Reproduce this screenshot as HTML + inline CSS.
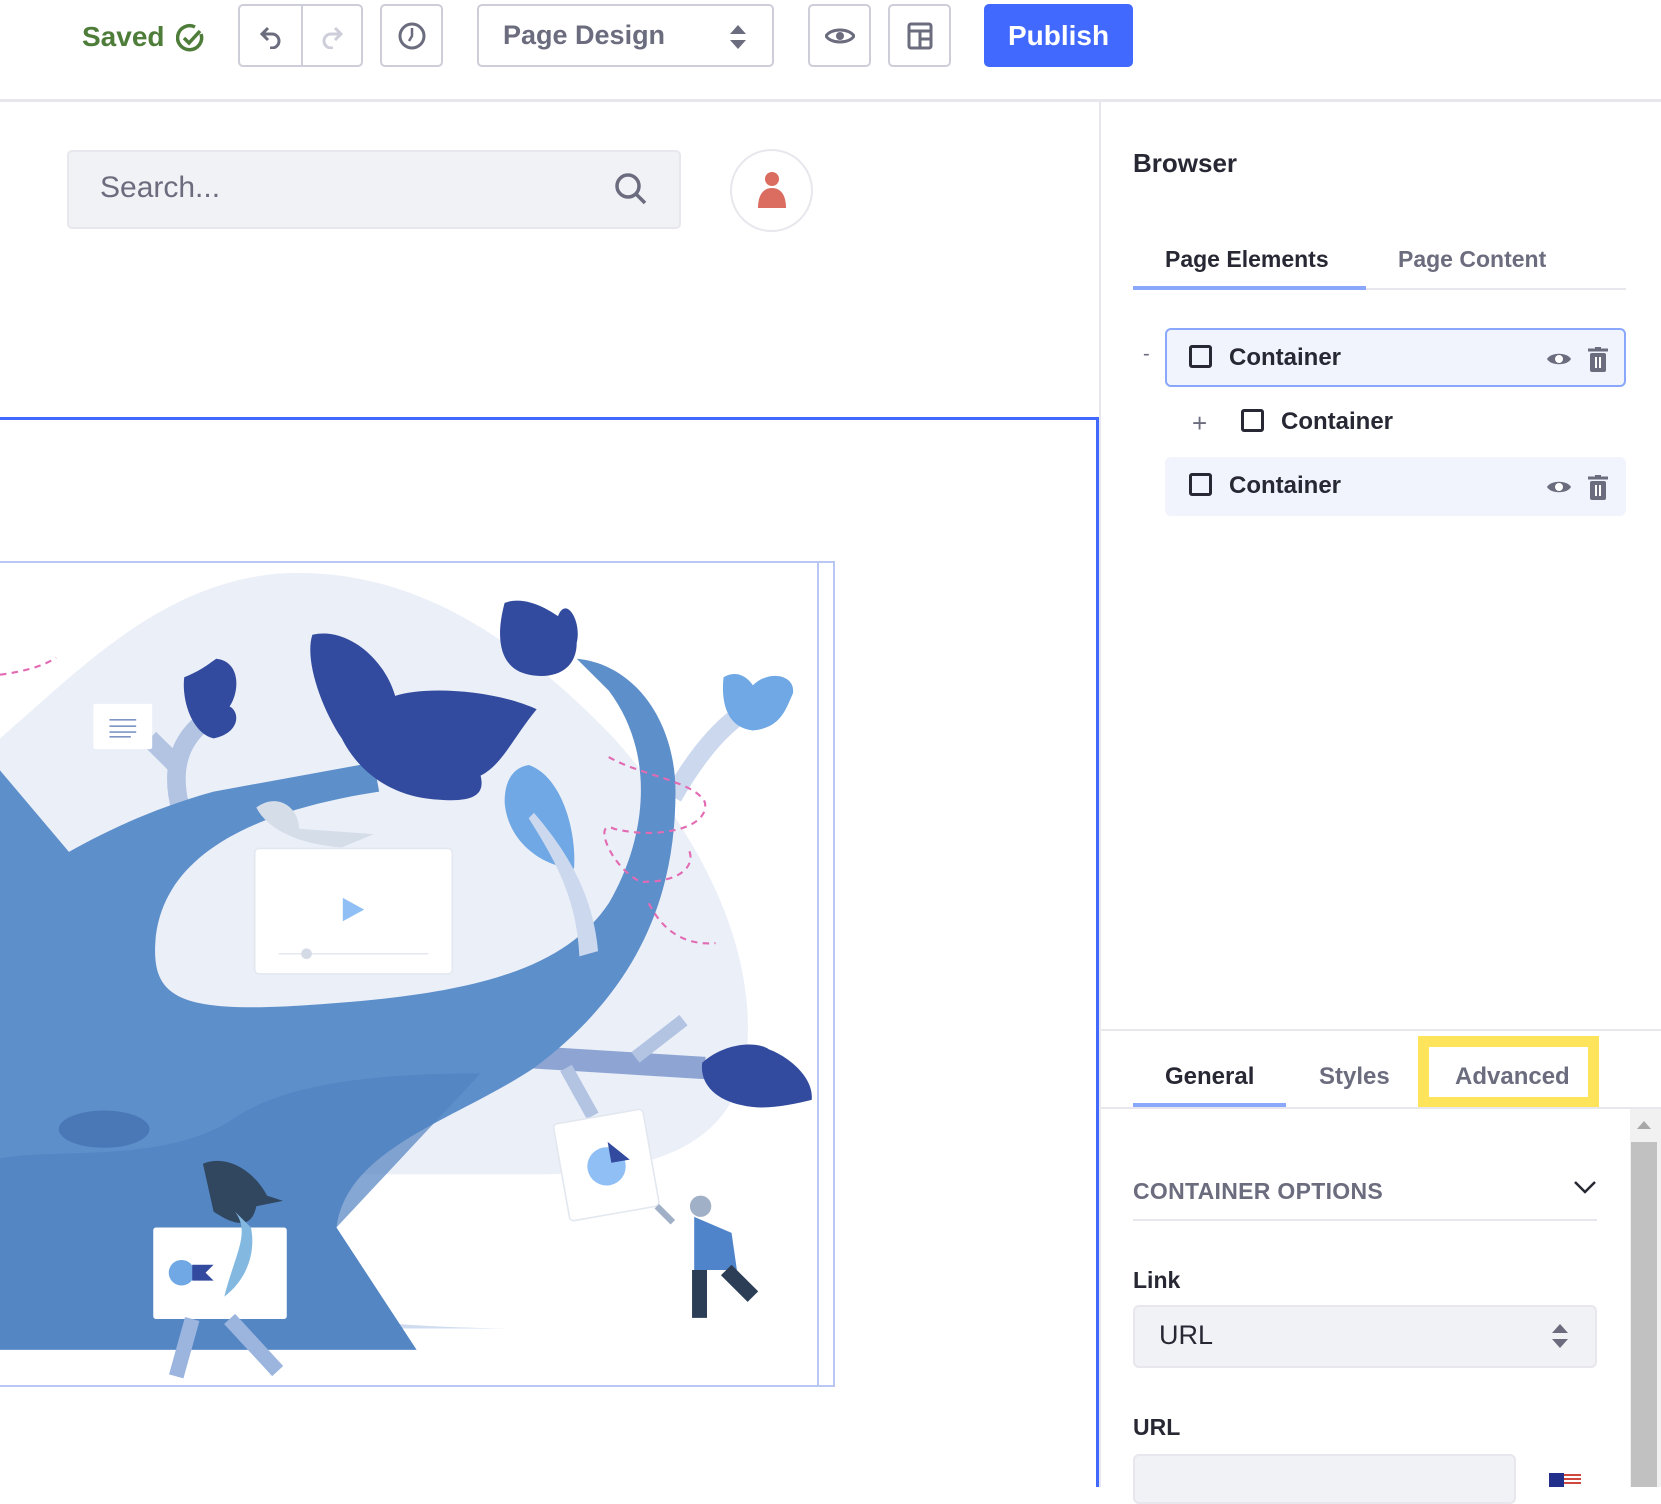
<!DOCTYPE html>
<html><head><meta charset="utf-8"><style>
*{box-sizing:border-box;margin:0;padding:0}
body{width:1661px;height:1487px;overflow:hidden;background:#fff;font-family:"Liberation Sans",sans-serif;position:relative;color:#272833}
.a{position:absolute}
.btn{position:absolute;top:4px;height:63px;border:2px solid #cdced9;border-radius:5px;background:#fff;display:flex;align-items:center;justify-content:center}
.b{font-weight:bold}
.row{position:absolute;left:1165px;width:461px;height:59px;border-radius:6px;background:#f1f4fd}
.cb{position:absolute;width:23px;height:23px;border:3px solid #272833;border-radius:3px}
.lbl{position:absolute;font-size:24px;font-weight:bold;color:#272833}
</style></head><body>
<div class="a b" style="left:82px;top:21px;font-size:28px;color:#4e7d3a">Saved</div>
<svg class="a" style="left:176px;top:23px" width="30" height="30" viewBox="0 0 30 30"><path d="M25 11A12 12 0 1 1 19 4" fill="none" stroke="#4e7d3a" stroke-width="3.5"/><path d="M8 15l5 5 11-12" fill="none" stroke="#4e7d3a" stroke-width="3.5"/></svg>
<div class="btn" style="left:238px;width:125px;border-color:#cdced9">
 <div style="position:absolute;left:61px;top:0;bottom:0;width:2px;background:#cdced9"></div>
 <svg class="a" style="left:19px;top:19px" width="24" height="24" viewBox="0 0 24 24"><path d="M9 3L3 9l6 6M3 9h10a7 7 0 0 1 0 14h-2" fill="none" stroke="#6b6c7e" stroke-width="3"/></svg>
 <svg class="a" style="left:80px;top:19px" width="24" height="24" viewBox="0 0 24 24"><path d="M15 3l6 6-6 6M21 9H11a7 7 0 0 0 0 14h2" fill="none" stroke="#cdced9" stroke-width="3"/></svg>
</div>
<div class="btn" style="left:380px;width:63px"><svg width="30" height="30" viewBox="0 0 30 30"><circle cx="15" cy="15" r="12" fill="none" stroke="#6b6c7e" stroke-width="3"/><path d="M15 7v8l-3 5" fill="none" stroke="#6b6c7e" stroke-width="2.5"/></svg></div>
<div class="btn" style="left:477px;width:297px;justify-content:flex-start;padding-left:24px"><span class="b" style="font-size:27px;color:#6b6c7e">Page Design</span>
 <svg class="a" style="left:250px;top:18px" width="18" height="26" viewBox="0 0 18 26"><path d="M9 1l8 9H1zM9 25l8-9H1z" fill="#6b6c7e"/></svg></div>
<div class="btn" style="left:808px;width:63px"><svg width="30" height="20" viewBox="0 0 30 20"><path d="M1 10C6 2 24 2 29 10 24 18 6 18 1 10z" fill="none" stroke="#6b6c7e" stroke-width="3"/><circle cx="15" cy="10" r="4" fill="#6b6c7e"/></svg></div>
<div class="btn" style="left:888px;width:63px"><svg width="26" height="28" viewBox="0 0 26 28"><rect x="2" y="2" width="22" height="24" rx="2" fill="none" stroke="#6b6c7e" stroke-width="3"/><path d="M2 9h22M13 9v17M13 17h11" stroke="#6b6c7e" stroke-width="3"/></svg></div>
<div class="a b" style="left:984px;top:4px;width:149px;height:63px;background:#4169fe;border-radius:5px;color:#fff;font-size:28px;display:flex;align-items:center;justify-content:center">Publish</div>
<div class="a" style="left:0;top:99px;width:1661px;height:3px;background:#e7e7ed"></div>
<div class="a" style="left:67px;top:150px;width:614px;height:79px;background:#f1f2f5;border:2px solid #e7e7ed;border-radius:5px"></div>
<div class="a" style="left:100px;top:171px;font-size:30px;color:#6b6c7e">Search...</div>
<svg class="a" style="left:614px;top:172px" width="34" height="34" viewBox="0 0 34 34"><circle cx="14" cy="14" r="11" fill="none" stroke="#6b6c7e" stroke-width="3.5"/><path d="M22 22l9 9" stroke="#6b6c7e" stroke-width="3.5"/></svg>
<div class="a" style="left:730px;top:149px;width:83px;height:83px;border-radius:50%;border:2px solid #e7e7ed;background:#fff"></div>
<svg class="a" style="left:754px;top:170px" width="36" height="40" viewBox="0 0 36 40"><circle cx="18" cy="9" r="7" fill="#da6d5f"/><path d="M4 38c0-14 6-20 14-20s14 6 14 20z" fill="#da6d5f"/></svg>
<div class="a" style="left:0;top:417px;width:1100px;height:3px;background:#4169fe"></div>
<div class="a" style="left:1096px;top:417px;width:3px;height:1070px;background:#4169fe"></div>
<div class="a" style="left:0;top:561px;width:835px;height:826px;border:2px solid #b9c7f5;border-left:none;overflow:hidden">
<div class="a" style="left:817px;top:0;width:2px;height:826px;background:#b9c7f5"></div>
<svg class="a" style="left:0;top:0" width="817" height="824" viewBox="0 0 1530 1550" preserveAspectRatio="none">
<path d="M0 330C150 200 300 40 520 20C750 5 950 120 1150 330C1300 500 1410 700 1400 900C1390 1080 1250 1150 1000 1150L0 1150Z" fill="#ebeff8"/>
<path d="M0 1250C300 1380 600 1440 980 1440L0 1440Z" fill="#cfdcf0"/>
<path d="M1000 930L1320 950" stroke="#8ea5d3" stroke-width="42"/>
<path d="M1190 930L1280 860" stroke="#b3c4e3" stroke-width="25"/>
<path d="M1060 950L1110 1040" stroke="#b3c4e3" stroke-width="25"/>
<path d="M1260 440C1300 370 1340 320 1380 290" stroke="#cbd8ee" stroke-width="35" fill="none"/>
<path d="M340 470C320 400 330 340 380 300M330 380L280 330" stroke="#b3c4e3" stroke-width="35" fill="none"/>
<path d="M0 390L160 580 60 720 0 700Z" fill="#5d8fcb"/>
<path d="M0 620C100 560 220 480 400 430L700 375 710 430C450 470 310 560 292 700C280 820 330 850 600 830C900 810 1060 760 1140 640C1210 520 1230 360 1140 240L1080 180C1190 190 1265 300 1265 430C1265 620 1200 800 1000 950C850 1050 650 1100 630 1250L780 1480 0 1480Z" fill="#5d8fcb"/>
<path d="M0 1120C100 1100 300 1130 430 1050C500 1000 620 960 900 960L630 1250 780 1480 0 1480Z" fill="#5182c1" opacity=".7"/>
<ellipse cx="195" cy="1065" rx="85" ry="35" fill="#4a78b6"/>
<path d="M480 460C520 430 560 460 560 500L700 510 640 535C560 530 500 500 480 460Z" fill="#d5dde9"/>
<path d="M585 135C650 120 720 180 740 250C800 230 930 240 1005 275C960 330 940 380 900 400C910 440 880 450 820 445C730 440 670 390 640 330C600 270 570 180 585 135Z" fill="#324b9f"/>
<path d="M945 75C985 60 1030 90 1045 100 1060 60 1090 110 1080 150 1080 200 1040 220 990 210 940 200 925 150 945 75Z" fill="#324b9f"/>
<path d="M345 215C380 200 390 190 405 180 450 185 450 240 430 270 450 280 450 320 400 330 360 320 340 260 345 215Z" fill="#324b9f"/>
<path d="M1315 940C1360 900 1420 900 1440 915 1480 930 1525 970 1520 1010 1480 1020 1430 1030 1390 1020 1340 1010 1310 980 1315 940Z" fill="#324b9f"/>
<path d="M1355 215C1380 200 1400 215 1410 230 1440 200 1490 210 1485 245 1470 280 1460 310 1410 315 1360 310 1350 260 1355 215Z" fill="#6fa8e4"/>
<path d="M990 380C1050 400 1080 500 1075 575 1010 570 950 520 945 450 945 410 960 385 990 380Z" fill="#6fa8e4"/>
<path d="M1000 470C1060 540 1110 620 1120 730L1085 740C1080 630 1040 560 990 480Z" fill="#cbd8ee"/>
<rect x="477" y="537" width="370" height="236" rx="8" fill="#fff" stroke="#e3e7ef" stroke-width="3"/>
<path d="M642 630L682 652 642 674Z" fill="#8fbff5"/><path d="M522 735H802" stroke="#e3e7ef" stroke-width="3"/><circle cx="574" cy="735" r="10" fill="#d5dbe6"/>
<rect x="175" y="265" width="110" height="85" rx="4" fill="#fff"/><path d="M205 295h50M205 307h50M205 318h50M205 327h40" stroke="#7e95c4" stroke-width="3"/>
<g transform="rotate(-10 1135 1130)"><rect x="1050" y="1040" width="170" height="185" rx="8" fill="#fff" stroke="#e3e7ef" stroke-width="3"/><circle cx="1135" cy="1135" r="36" fill="#8fbff5"/><path d="M1145 1090v40h35z" fill="#324b9f"/></g>
<path d="M380 1130C430 1110 480 1150 500 1190L530 1200 480 1210C470 1260 430 1240 400 1220Z" fill="#31475f"/>
<rect x="287" y="1250" width="250" height="172" rx="5" fill="#fff"/>
<circle cx="340" cy="1335" r="24" fill="#6fa8e4"/><path d="M360 1320h40l-15 15 15 15h-40z" fill="#324b9f"/>
<path d="M420 1380C440 1300 470 1260 440 1220L470 1250C480 1300 460 1350 420 1380Z" fill="#83b9e0"/>
<path d="M360 1422L330 1530M430 1422L520 1520" stroke="#9bb5df" stroke-width="28"/>
<path d="M1300 1230L1370 1260 1380 1330 1300 1330Z" fill="#4f84cb"/><circle cx="1312" cy="1210" r="20" fill="#9fb0c7"/>
<path d="M1310 1330L1310 1420M1360 1330L1410 1380" stroke="#2c3e55" stroke-width="28"/>
<path d="M1260 1240L1230 1210" stroke="#9fb0c7" stroke-width="12"/>
<path d="M0 210C40 205 80 195 105 178M1140 365C1200 400 1300 410 1320 450 1330 500 1230 520 1150 500 1110 480 1140 570 1200 600 1290 600 1300 560 1290 540M1215 640C1240 690 1280 720 1340 715" fill="none" stroke="#e26bb3" stroke-width="4" stroke-dasharray="12 10"/>
</svg></div>
<div class="a" style="left:1099px;top:102px;width:2px;height:1385px;background:#e7e7ed"></div>
<div class="a b" style="left:1133px;top:148px;font-size:26px;color:#272833">Browser</div>
<div class="a b" style="left:1165px;top:246px;font-size:23px;color:#272833">Page Elements</div>
<div class="a b" style="left:1398px;top:246px;font-size:23px;color:#6b6c7e">Page Content</div>
<div class="a" style="left:1133px;top:288px;width:493px;height:2px;background:#e7e7ed"></div>
<div class="a" style="left:1133px;top:286px;width:233px;height:4px;background:#89a7fb"></div>
<div class="a" style="left:1143px;top:343px;font-size:20px;color:#6b6c7e">-</div>
<div class="row" style="top:328px;border:2px solid #8aa8fb"></div>
<div class="cb" style="left:1189px;top:345px"></div><div class="lbl" style="left:1229px;top:344px">Container</div>
<div class="a" style="left:1192px;top:408px;font-size:26px;color:#6b6c7e">+</div>
<div class="cb" style="left:1241px;top:409px"></div><div class="lbl" style="left:1281px;top:408px">Container</div>
<div class="row" style="top:457px"></div>
<div class="cb" style="left:1189px;top:473px"></div><div class="lbl" style="left:1229px;top:472px">Container</div>
<svg class="a" style="left:1546px;top:350px" width="26" height="18" viewBox="0 0 26 18"><path d="M1 9C5 2 21 2 25 9 21 16 5 16 1 9z" fill="#6b6c7e"/><circle cx="13" cy="9" r="4" fill="#fff"/></svg>
<svg class="a" style="left:1546px;top:478px" width="26" height="18" viewBox="0 0 26 18"><path d="M1 9C5 2 21 2 25 9 21 16 5 16 1 9z" fill="#6b6c7e"/><circle cx="13" cy="9" r="4" fill="#fff"/></svg>
<svg class="a" style="left:1588px;top:347px" width="20" height="25" viewBox="0 0 20 25"><path d="M0 3h20M7 1h6" stroke="#6b6c7e" stroke-width="3"/><rect x="2" y="6" width="16" height="19" rx="2" fill="#6b6c7e"/><path d="M8 10v11M12 10v11" stroke="#fff" stroke-width="2"/></svg>
<svg class="a" style="left:1588px;top:475px" width="20" height="25" viewBox="0 0 20 25"><path d="M0 3h20M7 1h6" stroke="#6b6c7e" stroke-width="3"/><rect x="2" y="6" width="16" height="19" rx="2" fill="#6b6c7e"/><path d="M8 10v11M12 10v11" stroke="#fff" stroke-width="2"/></svg>
<div class="a" style="left:1101px;top:1029px;width:560px;height:2px;background:#e7e7ed"></div>
<div class="a b" style="left:1165px;top:1063px;font-size:24px;color:#272833">General</div>
<div class="a b" style="left:1319px;top:1063px;font-size:24px;color:#6b6c7e">Styles</div>
<div class="a" style="left:1418px;top:1036px;width:181px;height:72px;border:11px solid #fde45a"></div>
<div class="a b" style="left:1455px;top:1063px;font-size:24px;color:#6b6c7e">Advanced</div>
<div class="a" style="left:1101px;top:1107px;width:560px;height:2px;background:#e7e7ed"></div>
<div class="a" style="left:1133px;top:1103px;width:153px;height:4px;background:#89a7fb"></div>
<div class="a" style="left:1630px;top:1109px;width:31px;height:378px;background:#f1f1f1"></div>
<div class="a" style="left:1631px;top:1142px;width:26px;height:345px;background:#c1c1c1"></div>
<svg class="a" style="left:1636px;top:1120px" width="16" height="10"><path d="M8 1l7 8H1z" fill="#a8a8a8"/></svg>
<div class="a b" style="left:1133px;top:1178px;font-size:23px;color:#6b6c7e;letter-spacing:.3px">CONTAINER OPTIONS</div>
<svg class="a" style="left:1573px;top:1180px" width="24" height="14"><path d="M2 2l10 10 10-10" fill="none" stroke="#272833" stroke-width="2.5"/></svg>
<div class="a" style="left:1133px;top:1219px;width:464px;height:2px;background:#e7e7ed"></div>
<div class="a b" style="left:1133px;top:1267px;font-size:23px">Link</div>
<div class="a" style="left:1133px;top:1305px;width:464px;height:63px;background:#f1f2f5;border:2px solid #e7e7ed;border-radius:6px"></div>
<div class="a" style="left:1159px;top:1320px;font-size:27px;color:#272833">URL</div>
<svg class="a" style="left:1551px;top:1323px" width="18" height="26" viewBox="0 0 18 26"><path d="M9 1l8 9H1zM9 25l8-9H1z" fill="#6b6c7e"/></svg>
<div class="a b" style="left:1133px;top:1414px;font-size:23px">URL</div>
<div class="a" style="left:1133px;top:1454px;width:383px;height:50px;background:#f1f2f5;border:2px solid #e7e7ed;border-radius:6px"></div>
<svg class="a" style="left:1549px;top:1473px" width="32" height="14"><rect width="32" height="14" fill="#fff"/><path d="M0 2h32M0 6h32M0 10h32" stroke="#d0473d" stroke-width="2"/><rect width="15" height="14" fill="#22308c"/></svg>
</body></html>
